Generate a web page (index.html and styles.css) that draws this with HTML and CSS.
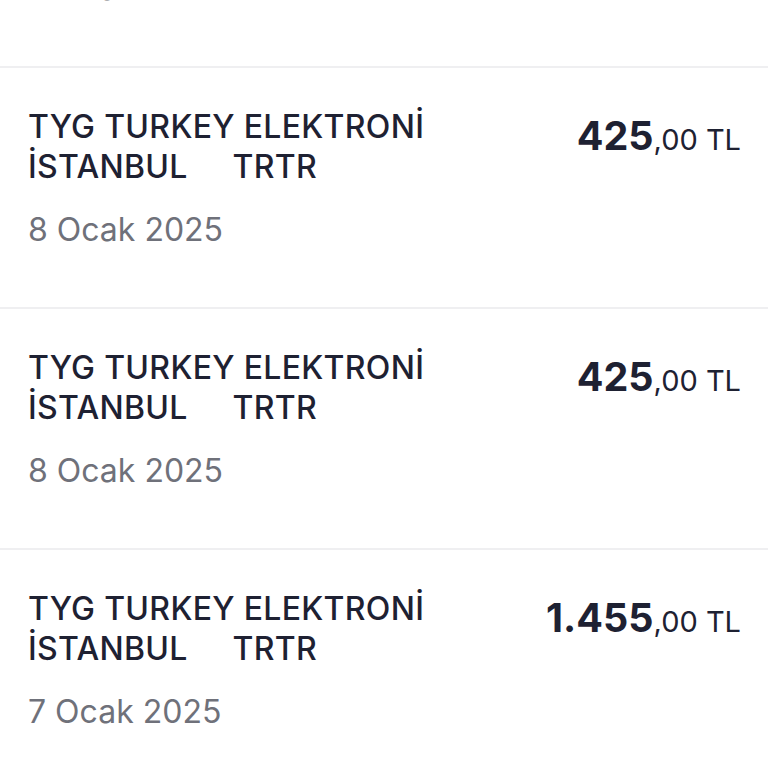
FILE: index.html
```html
<!DOCTYPE html>
<html lang="tr">
<head>
<meta charset="utf-8">
<link rel="stylesheet" href="styles.css">
</head>
<body>
<ul class="list">
  <li class="row">
    <div class="info">
      <div class="title">TYG TURKEY ELEKTRONİ<br>İSTANBUL<span class="gap">TRTR</span></div>
      <div class="date">8 Ocak 2025</div>
    </div>
    <div class="amount"><span class="whole">425</span>,00 TL</div>
  </li>
  <li class="row">
    <div class="info">
      <div class="title">TYG TURKEY ELEKTRONİ<br>İSTANBUL<span class="gap">TRTR</span></div>
      <div class="date">8 Ocak 2025</div>
    </div>
    <div class="amount"><span class="whole">425</span>,00 TL</div>
  </li>
  <li class="row">
    <div class="info">
      <div class="title">TYG TURKEY ELEKTRONİ<br>İSTANBUL<span class="gap">TRTR</span></div>
      <div class="date">8 Ocak 2025</div>
    </div>
    <div class="amount"><span class="whole">425</span>,00 TL</div>
  </li>
  <li class="row">
    <div class="info">
      <div class="title">TYG TURKEY ELEKTRONİ<br>İSTANBUL<span class="gap">TRTR</span></div>
      <div class="date">7 Ocak 2025</div>
    </div>
    <div class="amount"><span class="whole">1.455</span>,00 TL</div>
  </li>
</ul>
</body>
</html>
```

FILE: styles.css
```css
html, body {
  margin: 0;
  padding: 0;
  background: #ffffff;
  overflow: hidden;
}
body {
  font-family: Inter, "Noto Sans", sans-serif;
}
.list {
  list-style: none;
  margin: -175px 0 0 0;
  padding: 0;
}
.row {
  display: flex;
  justify-content: space-between;
  align-items: flex-start;
  padding: 39px 27px 0 28px;
  border-top: 2px solid #efeff1;
  box-sizing: border-box;
  height: 241px;
}
.title {
  font-size: 32px;
  line-height: 40px;
  font-weight: 500;
  letter-spacing: 0.3px;
  color: #1e2132;
}
.gap {
  margin-left: 45px;
}
.date {
  margin-top: 23px;
  font-size: 32px;
  line-height: 40px;
  color: #6f717a;
}
.amount {
  margin-top: 9px;
  font-size: 29px;
  line-height: 40px;
  color: #1e2132;
  white-space: nowrap;
}
.whole {
  font-size: 39.5px;
  font-weight: 700;
}
```
